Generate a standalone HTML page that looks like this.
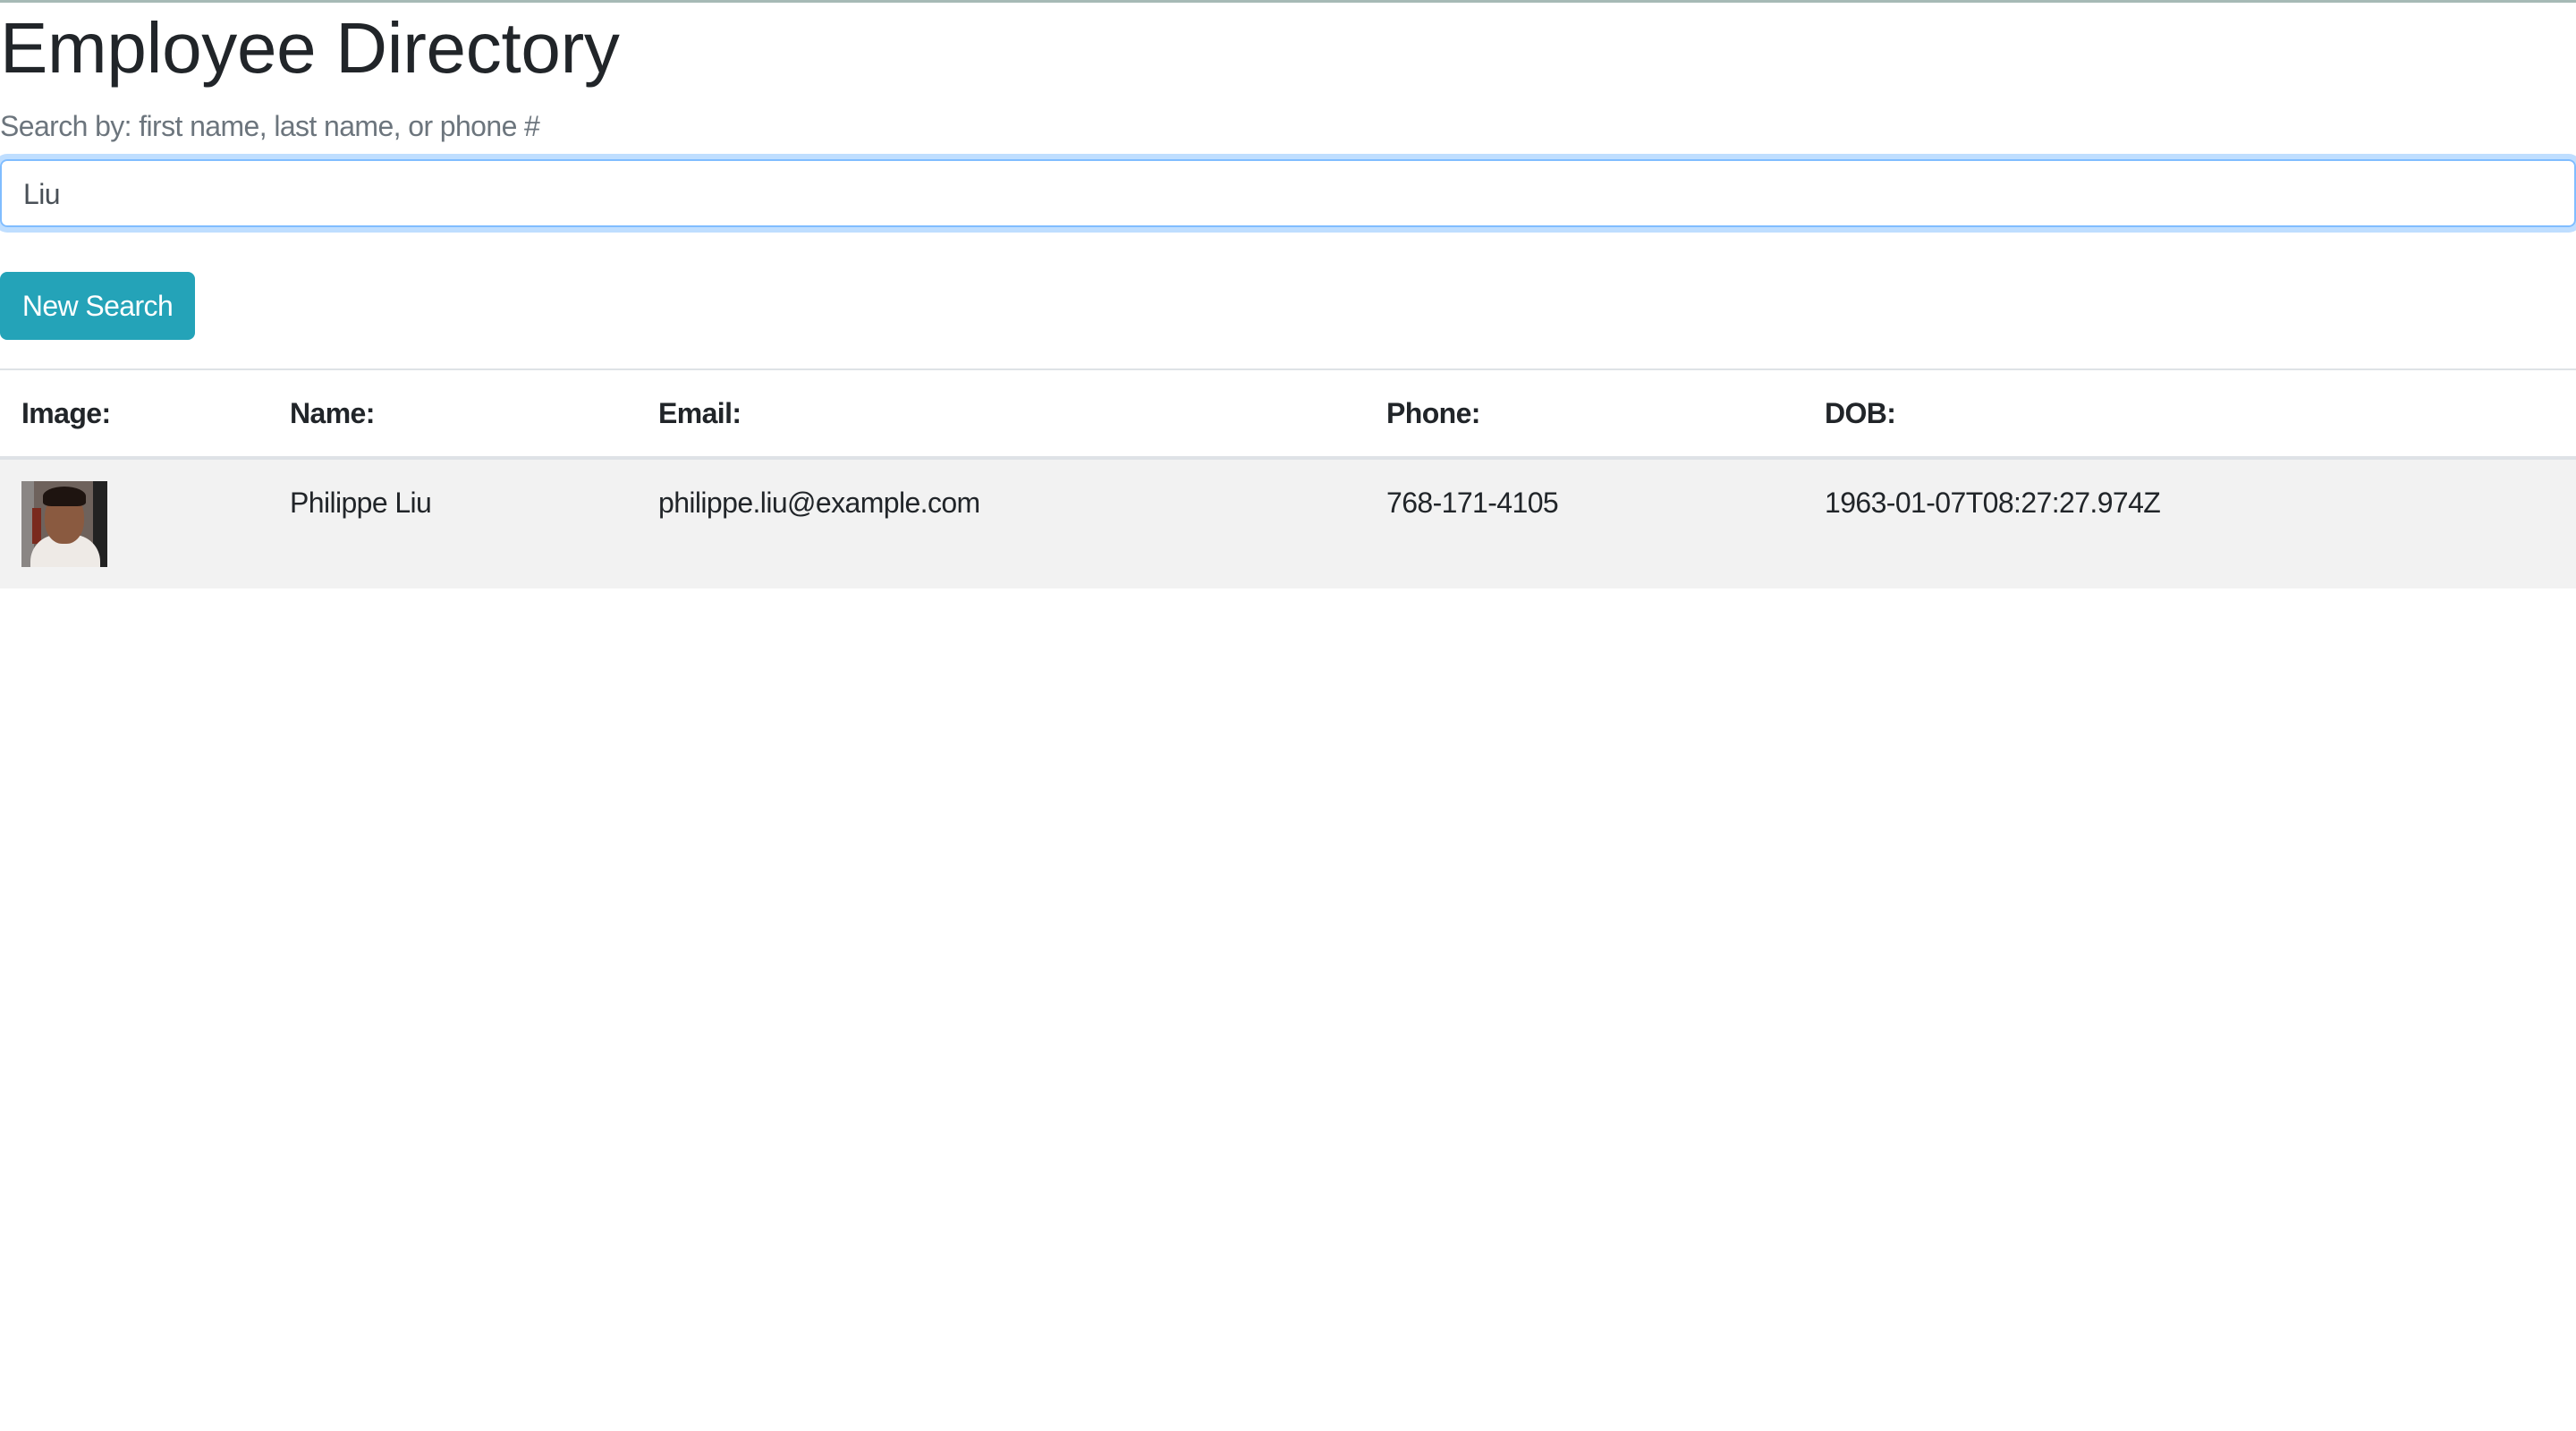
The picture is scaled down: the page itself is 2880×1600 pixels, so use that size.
<!DOCTYPE html>
<html><head><meta charset="utf-8"><style>
html,body{margin:0;padding:0;width:2880px;height:1600px;overflow:hidden;background:#fff;font-family:"Liberation Sans",sans-serif;color:#212529}
.a{position:absolute;white-space:nowrap}
.t{letter-spacing:-0.6px}
</style></head><body>
<div class="a" style="left:0;top:0;width:2880px;height:3px;background:#a6bab6"></div>
<div class="a" style="left:0;top:6px;font-size:80px;line-height:96px;color:#212529;letter-spacing:-0.3px">Employee Directory</div>
<div class="a t" style="left:0;top:117px;font-size:32px;line-height:48px;color:#6c757d">Search by: first name, last name, or phone #</div>
<div class="a t" style="left:0;top:178px;width:2880px;height:76px;box-sizing:border-box;border:2px solid #80bdff;border-radius:8px;box-shadow:0 0 0 6px rgba(0,123,255,.25);font-size:32px;line-height:74px;padding-left:24px;color:#495057">Liu</div>
<div class="a t" style="left:0;top:304px;width:218px;height:76px;background:#24a3b8;border-radius:8px;color:#fff;font-size:32px;line-height:76px;text-align:center">New Search</div>
<div class="a" style="left:0;top:412px;width:2880px;height:2px;background:#dee2e6"></div>
<div class="a" style="left:0;top:510px;width:2880px;height:4px;background:#dee2e6"></div>
<div class="a" style="left:0;top:514px;width:2880px;height:144px;background:#f2f2f2"></div>
<div class="a t" style="left:24px;top:438px;font-size:32px;line-height:48px;font-weight:bold">Image:</div>
<div class="a t" style="left:324px;top:438px;font-size:32px;line-height:48px;font-weight:bold">Name:</div>
<div class="a t" style="left:736px;top:438px;font-size:32px;line-height:48px;font-weight:bold">Email:</div>
<div class="a t" style="left:1550px;top:438px;font-size:32px;line-height:48px;font-weight:bold">Phone:</div>
<div class="a t" style="left:2040px;top:438px;font-size:32px;line-height:48px;font-weight:bold">DOB:</div>
<div class="a" style="left:24px;top:538px;width:96px;height:96px;overflow:hidden;background:#6e625c">
  <div class="a" style="left:0;top:0;width:14px;height:96px;background:#8a8684"></div>
  <div class="a" style="left:80px;top:0;width:16px;height:96px;background:#222"></div>
  <div class="a" style="left:12px;top:30px;width:10px;height:40px;background:#7a2a1e"></div>
  <div class="a" style="left:10px;top:60px;width:78px;height:40px;border-radius:30px 30px 0 0;background:#eeeae6"></div>
  <div class="a" style="left:26px;top:14px;width:44px;height:56px;border-radius:45%;background:#8a5a40"></div>
  <div class="a" style="left:24px;top:6px;width:48px;height:22px;border-radius:50% 50% 20% 20%;background:#1e1410"></div>
</div>
<div class="a t" style="left:324px;top:538px;font-size:32px;line-height:48px">Philippe Liu</div>
<div class="a t" style="left:736px;top:538px;font-size:32px;line-height:48px">philippe.liu@example.com</div>
<div class="a t" style="left:1550px;top:538px;font-size:32px;line-height:48px">768-171-4105</div>
<div class="a t" style="left:2040px;top:538px;font-size:32px;line-height:48px">1963-01-07T08:27:27.974Z</div>
</body></html>
